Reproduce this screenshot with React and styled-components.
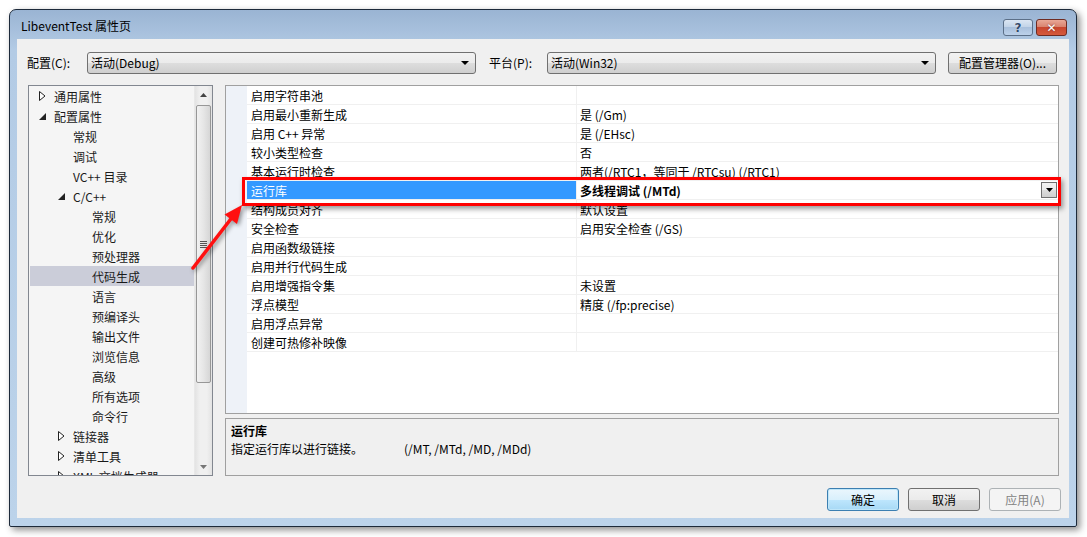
import React from 'react';
import styled, { createGlobalStyle } from 'styled-components';

const GlobalStyle = createGlobalStyle`
    html, body {
        margin: 0;
        padding: 0;
        background: #fff;
    }
    body {
        font-family: "Noto Sans CJK SC", "Liberation Sans", sans-serif;
        font-size: 12px;
        color: #000;
    }
`;

const Page = styled.div`
    width: 1087px;
    height: 537px;
    padding: 9px 0 0 9px;
    box-sizing: border-box;
`;

const Window = styled.div`
    width: 1068px;
    height: 518px;
    box-sizing: border-box;
    border: 1px solid #1d2a3a;
    border-radius: 7px 7px 2px 2px;
    background: linear-gradient(180deg, #9ab4d3 0%, #b3cbe5 40px, #bcd3ea 100%);
    box-shadow: 3px 3px 7px rgba(0,0,0,0.45);
    display: flex;
    flex-direction: column;
`;

const TitleBar = styled.div`
    height: 29px;
    display: flex;
    padding: 0 9px 0 11px;
    box-sizing: border-box;
`;

const Title = styled.div`
    flex: 1;
    line-height: 31px;
    font-size: 12px;
    color: #000;
`;

const Caption = styled.div`
    display: flex;
    margin-top: 9px;
    gap: 3px;
    height: 17px;
`;

const CapButton = styled.div`
    width: ${p => p.$w}px;
    height: 17px;
    box-sizing: border-box;
    border: 1px solid ${p => p.$close ? '#6e2b22' : '#5b6f88'};
    border-radius: 3px;
    background: ${p => p.$close
        ? 'linear-gradient(180deg, #e9a897 0%, #d98470 45%, #c8462f 50%, #d55a3c 100%)'
        : 'linear-gradient(180deg, #dbe6f3 0%, #c3d4e8 45%, #a9c0dc 50%, #bcd1ea 100%)'};
    display: flex;
    align-items: center;
    justify-content: center;
    color: ${p => p.$close ? '#fff' : '#324a6b'};
    font-family: "DejaVu Sans", sans-serif;
    font-weight: bold;
    font-size: 12px;
    line-height: 1;
    text-shadow: ${p => p.$close ? '0 0 2px #6e2b22' : '0 0 1px #fff'};
`;

const Client = styled.div`
    flex: 1;
    margin: 0 7px 8px 7px;
    background: #f0f0f0;
    padding: 13px 10px 7px 11px;
    display: flex;
    flex-direction: column;
`;

const TopRow = styled.div`
    display: flex;
    align-items: center;
    height: 22px;
    margin-left: -1px;
`;

const Label = styled.div`
    width: ${p => p.$w}px;
    line-height: 22px;
`;

const Combo = styled.div`
    width: ${p => p.$w}px;
    height: 22px;
    box-sizing: border-box;
    border: 1px solid #707070;
    border-radius: 3px;
    background: linear-gradient(180deg, #f2f2f2 0%, #ebebeb 50%, #dddddd 51%, #cfcfcf 100%);
    display: flex;
    align-items: center;
    padding: 0 6px 0 3px;
    margin-right: ${p => p.$mr || 0}px;
    line-height: 20px;
`;

const ComboText = styled.span`
    flex: 1;
`;

const DownArrow = styled.span`
    width: 0;
    height: 0;
    border-left: 4px solid transparent;
    border-right: 4px solid transparent;
    border-top: 4px solid #000;
`;

const PushButton = styled.div`
    width: ${p => p.$w}px;
    height: ${p => p.$h || 23}px;
    box-sizing: border-box;
    border: 1px solid ${p => p.$default ? '#3c7fb1' : p.$disabled ? '#adb2b5' : '#707070'};
    border-radius: 3px;
    background: ${p => p.$default
        ? 'linear-gradient(180deg, #eaf6fd 0%, #d9f0fc 50%, #bee6fd 51%, #a7d9f5 100%)'
        : p.$disabled
            ? '#f4f4f4'
            : 'linear-gradient(180deg, #f2f2f2 0%, #ebebeb 50%, #dddddd 51%, #cfcfcf 100%)'};
    box-shadow: ${p => p.$default ? 'inset 0 0 0 1px #bfe6f9' : 'none'};
    color: ${p => p.$disabled ? '#838383' : '#000'};
    display: flex;
    align-items: center;
    justify-content: center;
    line-height: 1;
`;

const Main = styled.div`
    position: relative;
    height: 391px;
    margin-top: 11px;
    display: flex;
    gap: 12px;
`;

const TreePanel = styled.div`
    width: 185px;
    box-sizing: border-box;
    border: 1px solid #828790;
    background: #f5f5f5;
    display: flex;
    overflow: hidden;
`;

const TreeList = styled.div`
    flex: 1;
    overflow: hidden;
`;

const TreeRow = styled.div`
    height: 20px;
    display: flex;
    align-items: center;
    margin-left: 1px;
    padding-left: ${p => p.$level * 19 + 7}px;
    background: ${p => p.$selected ? '#cbcdd9' : 'transparent'};
    color: #1a1a1a;
    white-space: nowrap;
`;

const Expander = styled.span`
    width: 10px;
    height: 10px;
    margin-right: 7px;
    display: flex;
    align-items: center;
    justify-content: center;
    flex: none;
`;

const ScrollBar = styled.div`
    width: 17px;
    display: flex;
    flex-direction: column;
    background: linear-gradient(90deg, #e3e3e3 0%, #f0f0f0 30%, #f0f0f0 70%, #e3e3e3 100%);
    border-left: 1px solid #e8e8e8;
`;

const ScrollArrow = styled.div`
    height: 17px;
    display: flex;
    align-items: center;
    justify-content: center;
`;

const Track = styled.div`
    flex: 1;
    padding-top: 2px;
`;

const Thumb = styled.div`
    height: 278px;
    margin: 0 1px;
    box-sizing: border-box;
    border: 1px solid #979797;
    border-radius: 2px;
    background: linear-gradient(90deg, #f2f2f2 0%, #e6e6e6 50%, #d6d6d6 100%);
    display: flex;
    align-items: center;
    justify-content: center;
`;

const Grip = styled.div`
    width: 7px;
    height: 7px;
    background: repeating-linear-gradient(180deg, #555 0, #555 1px, transparent 1px, transparent 2px);
`;

const RightCol = styled.div`
    flex: 1;
    display: flex;
    flex-direction: column;
    gap: 4px;
`;

const Grid = styled.div`
    position: relative;
    height: 329px;
    box-sizing: border-box;
    border: 1px solid #a0a0a0;
    background: #fff;
`;

const GridRows = styled.div`
    display: flex;
    flex-direction: column;
    height: 100%;
    background: linear-gradient(90deg, #eef2f8 0, #eef2f8 21px, transparent 21px);
`;

const PropRow = styled.div`
    height: 19px;
    display: flex;
    margin-left: 21px;
    border-bottom: 1px solid #f0f0f0;
    box-sizing: border-box;
    line-height: 17px;
`;

const NameCell = styled.div`
    width: 330px;
    box-sizing: border-box;
    padding: 1px 0 0 4px;
    border-right: 1px solid #f0f0f0;
    background: ${p => p.$selected ? '#3399ff' : 'transparent'};
    color: ${p => p.$selected ? '#fff' : '#000'};
    white-space: nowrap;
`;

const ValueCell = styled.div`
    flex: 1;
    padding-left: 3px;
    display: flex;
    align-items: center;
    font-weight: ${p => p.$bold ? 'bold' : 'normal'};
    white-space: nowrap;
`;

const ValueText = styled.span`
    flex: 1;
    padding-top: 1px;
`;

const CellDrop = styled.div`
    width: 16px;
    height: 16px;
    margin-right: 1px;
    box-sizing: border-box;
    border: 1px solid #707070;
    background: linear-gradient(180deg, #f2f2f2 0%, #ebebeb 50%, #dddddd 51%, #cfcfcf 100%);
    display: flex;
    align-items: center;
    justify-content: center;
`;

const Highlight = styled.div`
    position: absolute;
    left: 16px;
    top: 91px;
    width: 819px;
    height: 29px;
    box-sizing: border-box;
    border: 3px solid #ff0000;
    box-shadow: 2px 3px 5px rgba(0,0,0,0.4);
    pointer-events: none;
`;

const Pointer = styled.svg`
    position: absolute;
    left: 157px;
    top: 110px;
    overflow: visible;
    filter: drop-shadow(2px 2px 2px rgba(0,0,0,0.4));
`;

const Desc = styled.div`
    flex: 1;
    box-sizing: border-box;
    border: 1px solid #a0a0a0;
    background: #f0f0f0;
    padding: 3px 5px;
    line-height: 18px;
`;

const DescTitle = styled.div`
    font-weight: bold;
`;

const DescLead = styled.span`
    display: inline-block;
    width: 173px;
`;

const ButtonRow = styled.div`
    display: flex;
    justify-content: flex-end;
    gap: 9px;
    margin-top: 12px;
    margin-right: -2px;
`;

const tree = [
    { label: '通用属性', level: 0, exp: 'closed' },
    { label: '配置属性', level: 0, exp: 'open' },
    { label: '常规', level: 1 },
    { label: '调试', level: 1 },
    { label: 'VC++ 目录', level: 1 },
    { label: 'C/C++', level: 1, exp: 'open' },
    { label: '常规', level: 2 },
    { label: '优化', level: 2 },
    { label: '预处理器', level: 2 },
    { label: '代码生成', level: 2, selected: true },
    { label: '语言', level: 2 },
    { label: '预编译头', level: 2 },
    { label: '输出文件', level: 2 },
    { label: '浏览信息', level: 2 },
    { label: '高级', level: 2 },
    { label: '所有选项', level: 2 },
    { label: '命令行', level: 2 },
    { label: '链接器', level: 1, exp: 'closed' },
    { label: '清单工具', level: 1, exp: 'closed' },
    { label: 'XML 文档生成器', level: 1, exp: 'closed' },
];

const props = [
    ['启用字符串池', ''],
    ['启用最小重新生成', '是 (/Gm)'],
    ['启用 C++ 异常', '是 (/EHsc)'],
    ['较小类型检查', '否'],
    ['基本运行时检查', '两者(/RTC1，等同于 /RTCsu) (/RTC1)'],
    ['运行库', '多线程调试 (/MTd)', true],
    ['结构成员对齐', '默认设置'],
    ['安全检查', '启用安全检查 (/GS)'],
    ['启用函数级链接', ''],
    ['启用并行代码生成', ''],
    ['启用增强指令集', '未设置'],
    ['浮点模型', '精度 (/fp:precise)'],
    ['启用浮点异常', ''],
    ['创建可热修补映像', ''],
];

const ExpandIcon = ({ type }) => {
    if (type === 'closed') {
        return (
            <svg width="7" height="10" viewBox="0 0 7 10">
                <path d="M0.5 0.5 L6 5 L0.5 9.5 Z" fill="#fff" stroke="#222" strokeWidth="1" />
            </svg>
        );
    }
    return (
        <svg width="7" height="7" viewBox="0 0 7 7">
            <path d="M7 0 L7 7 L0 7 Z" fill="#222" />
        </svg>
    );
};

const Tri = ({ up, color = '#000', w = 7 }) => (
    <svg width={w} height="4" viewBox="0 0 7 4">
        <path d={up ? 'M0 4 L3.5 0 L7 4 Z' : 'M0 0 L7 0 L3.5 4 Z'} fill={color} />
    </svg>
);

export default function App() {
    return (
        <Page>
            <GlobalStyle />
            <Window>
                <TitleBar>
                    <Title>LibeventTest 属性页</Title>
                    <Caption>
                        <CapButton $w={30}>?</CapButton>
                        <CapButton $w={31} $close>✕</CapButton>
                    </Caption>
                </TitleBar>
                <Client>
                    <TopRow>
                        <Label $w={60}>配置(C):</Label>
                        <Combo $w={389} $mr={13}>
                            <ComboText>活动(Debug)</ComboText>
                            <DownArrow />
                        </Combo>
                        <Label $w={58}>平台(P):</Label>
                        <Combo $w={389} $mr={12}>
                            <ComboText>活动(Win32)</ComboText>
                            <DownArrow />
                        </Combo>
                        <PushButton $w={109} $h={22}>配置管理器(O)...</PushButton>
                    </TopRow>

                    <Main>
                        <TreePanel>
                            <TreeList>
                                {tree.map((t, i) => (
                                    <TreeRow key={i} $level={t.level} $selected={t.selected}>
                                        <Expander>{t.exp ? <ExpandIcon type={t.exp} /> : null}</Expander>
                                        {t.label}
                                    </TreeRow>
                                ))}
                            </TreeList>
                            <ScrollBar>
                                <ScrollArrow><Tri up color="#444" /></ScrollArrow>
                                <Track>
                                    <Thumb><Grip /></Thumb>
                                </Track>
                                <ScrollArrow><Tri color="#777" /></ScrollArrow>
                            </ScrollBar>
                        </TreePanel>

                        <RightCol>
                            <Grid>
                                <GridRows>
                                    {props.map(([name, value, sel], i) => (
                                        <PropRow key={i}>
                                            <NameCell $selected={sel}>{name}</NameCell>
                                            <ValueCell $bold={sel}>
                                                <ValueText>{value}</ValueText>
                                                {sel ? <CellDrop><Tri w={7} /></CellDrop> : null}
                                            </ValueCell>
                                        </PropRow>
                                    ))}
                                </GridRows>
                                <Highlight />
                            </Grid>
                            <Desc>
                                <DescTitle>运行库</DescTitle>
                                <div>
                                    <DescLead>指定运行库以进行链接。</DescLead>
                                    (/MT, /MTd, /MD, /MDd)
                                </div>
                            </Desc>
                        </RightCol>

                        <Pointer width="60" height="80" viewBox="0 0 60 80">
                            <line x1="8" y1="73" x2="47" y2="22.5" stroke="#ff1010" strokeWidth="3.5" strokeLinecap="round" />
                            <path d="M57 10 L52 29 L39.5 19.5 Z" fill="#ff1010" />
                        </Pointer>
                    </Main>

                    <ButtonRow>
                        <PushButton $w={72} $default>确定</PushButton>
                        <PushButton $w={72}>取消</PushButton>
                        <PushButton $w={72} $disabled>应用(A)</PushButton>
                    </ButtonRow>
                </Client>
            </Window>
        </Page>
    );
}
